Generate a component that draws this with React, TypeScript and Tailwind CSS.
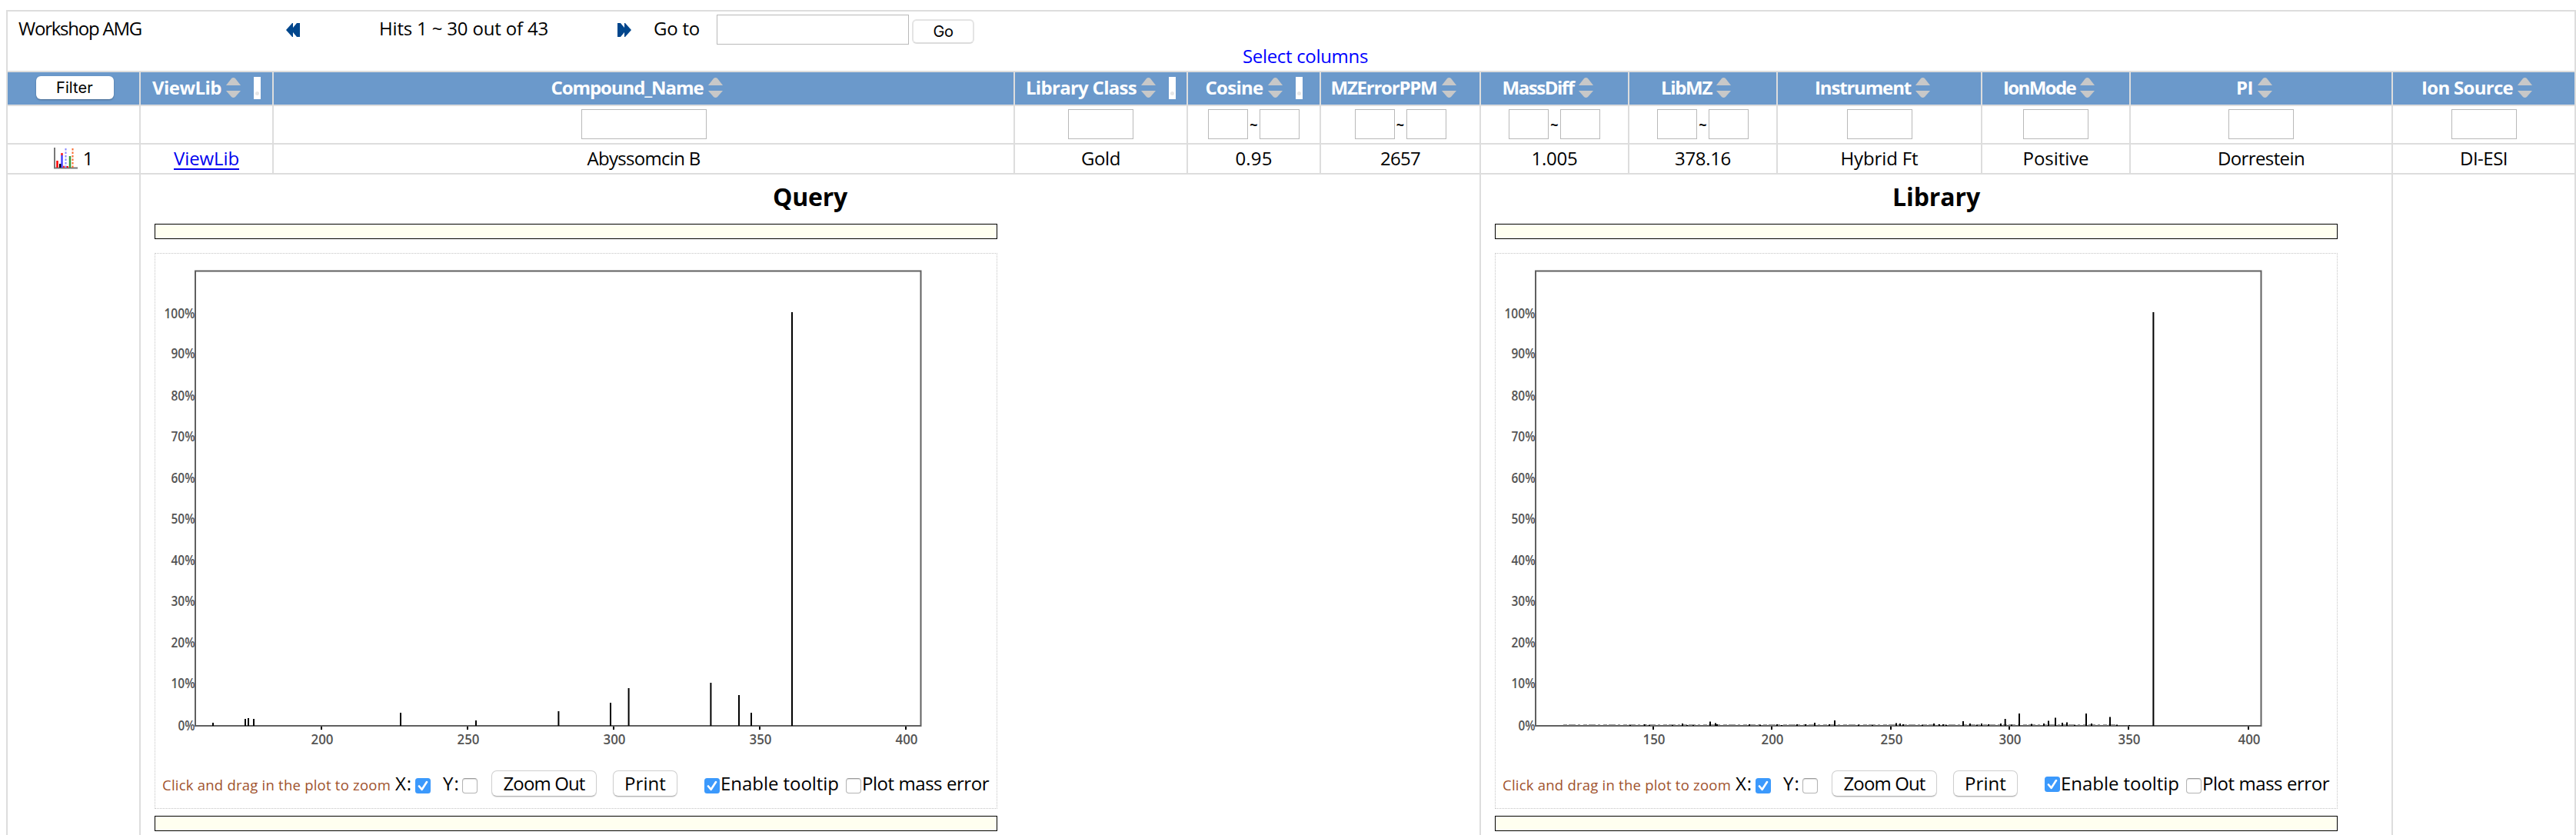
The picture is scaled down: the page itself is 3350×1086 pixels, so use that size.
import { useLayoutEffect, useRef, useState } from "react";

/* Text set to an exact measure by adjusting its tracking. */
function Fit({ w, children, className = "" }: { w: number; children: string; className?: string }) {
  const ref = useRef<HTMLSpanElement>(null);
  const [tracking, setTracking] = useState(0);
  useLayoutEffect(() => {
    if (!ref.current) return;
    const natural = ref.current.getBoundingClientRect().width;
    setTracking((w - natural) / children.length);
  }, []);
  return (
    <span ref={ref} className={`inline-block whitespace-pre ${className}`} style={{ letterSpacing: tracking }}>
      {children}
    </span>
  );
}

type Filter = "none" | "wide" | "single" | "range";
type Column = { label: string; w: number; bar?: boolean; filter: Filter; value: string; vw: number };

const columns: Column[] = [
  { label: "ViewLib", w: 90, bar: true, filter: "none", value: "ViewLib", vw: 85 },
  { label: "Compound_Name", w: 198, filter: "wide", value: "Abyssomcin B", vw: 147 },
  { label: "Library Class", w: 144, bar: true, filter: "single", value: "Gold", vw: 51 },
  { label: "Cosine", w: 75, bar: true, filter: "range", value: "0.95", vw: 48 },
  { label: "MZErrorPPM", w: 138, filter: "range", value: "2657", vw: 52 },
  { label: "MassDiff", w: 93, filter: "range", value: "1.005", vw: 60 },
  { label: "LibMZ", w: 66, filter: "range", value: "378.16", vw: 73 },
  { label: "Instrument", w: 125, filter: "single", value: "Hybrid Ft", vw: 101 },
  { label: "IonMode", w: 94, filter: "single", value: "Positive", vw: 86 },
  { label: "PI", w: 22, filter: "single", value: "Dorrestein", vw: 113 },
  { label: "Ion Source", w: 119, filter: "single", value: "DI-ESI", vw: 62 },
];

const GRID =
  "grid grid-cols-[173px_173px_964px_225px_173px_208px_193px_193px_266px_193px_341px_238px] border-t-2 border-[#dddddd]";
const CELL = "border-l-2 border-[#dddddd] flex items-center justify-center";
const INPUT = "h-[39px] border border-[#b9b9b9] bg-white";

function SortArrows() {
  return (
    <svg className="ml-[6px] h-[26px] w-[19px] shrink-0" viewBox="0 0 19 26">
      <path d="M0 10H19L12 1Q9.500 -1 7 1Z" fill="#c8c8c8" />
      <path d="M0 17H19L12 25Q9.500 27 7 25Z" fill="#c8c8c8" />
    </svg>
  );
}

function FilterInputs({ kind }: { kind: Filter }) {
  if (kind === "none") return null;
  if (kind === "range")
    return (
      <>
        <div className={`${INPUT} w-[52px]`} />
        <span className="w-[15px] pt-[2px] text-center text-[18px] leading-none font-bold">~</span>
        <div className={`${INPUT} w-[52px]`} />
      </>
    );
  return kind === "wide" ? <div className={`${INPUT} w-[163px]`} /> : <div className={`${INPUT} w-[85px]`} />;
}

function ChartIcon() {
  return (
    <svg className="h-[28px] w-[31px]" viewBox="0 0 31 28">
      <path d="M1 0V26.500H31" fill="none" stroke="#777" strokeWidth="2" />
      <path d="M4.500 17V26M17.500 24V26" stroke="#f00" strokeWidth="2.500" />
      <path d="M8.500 21V26" stroke="#000" strokeWidth="3" />
      <path d="M10.500 9V26" stroke="#44f" strokeWidth="2.500" />
      <path d="M10.500 7V10M12 25h2" stroke="#f22" strokeWidth="2.500" />
      <path d="M15.500 1V26" stroke="#88f" strokeWidth="2" strokeDasharray="2.500 2" />
      <path d="M21 11V26" stroke="#393" strokeWidth="2.500" />
      <path d="M24.500 1V26" stroke="#f96a2c" strokeWidth="2" strokeDasharray="2.500 2" />
    </svg>
  );
}

function Check({ on, raised }: { on?: boolean; raised?: boolean }) {
  const lift = raised ? "-mt-1" : "";
  return on ? (
    <svg className={`${lift} size-5 shrink-0`} viewBox="0 0 20 20">
      <rect width="20" height="20" rx="3.500" fill="#3b99fc" />
      <path d="M5 10.500L8.700 14.800L15 5" fill="none" stroke="#fff" strokeWidth="2.600" strokeLinecap="round" strokeLinejoin="round" />
    </svg>
  ) : (
    <div className="size-5 shrink-0 rounded-[4px] border border-[#b4b4b4] border-t-[#9a9a9a] bg-white shadow-[inset_0_1px_1px_#dddddd]" />
  );
}

type Mark = [number, number];
const queryPeaks: Mark[] = [
  [277, 940], [319, 935], [323, 934], [330, 935], [521, 927], [619, 937], [726.4, 925], [794, 914],
  [817.6, 895], [924.4, 888], [961, 904], [977, 927], [1030, 406],
];
const queryTicks: Mark[] = [[200, 418], [250, 608], [300, 798], [350, 988], [400, 1178]];

const libraryPeaks: Mark[] = (
  [
    [2120, 943], [2138.7, 942], [2145, 943], [2175, 943], [2188, 941], [2194, 943], [2202, 943], [2224, 938.5], [2231, 940.5],
    [2233, 942], [2275, 942], [2289, 942.5], [2311, 942], [2317, 943], [2337, 942], [2348, 942], [2360, 940], [2379, 942],
    [2386, 937], [2417, 942.5], [2435, 943], [2466, 940.5], [2471, 941], [2475, 942], [2500, 942.5], [2515, 941],
    [2522, 942], [2527, 942], [2531, 943], [2553, 938], [2562, 941], [2571, 942.5], [2577, 941], [2586, 942], [2602, 941],
    [2607.7, 935], [2616, 942.5], [2626, 928], [2642, 941.5], [2658, 941], [2664, 937.5], [2673, 933.5], [2682, 940],
    [2688, 939.5], [2698, 943], [2713, 928], [2720, 941], [2744, 932.5], [2753, 942.5], [2769, 943], [2800.4, 406],
  ] as Mark[]
).map(([x, y]) => [x - 1743, y]);
const libraryTicks: Mark[] = [[150, 407], [200, 561], [250, 716], [300, 870], [350, 1025], [400, 1181]];

const yLabels: Mark[] = [
  [100, 407], [90, 459.5], [80, 514], [70, 567], [60, 621], [50, 674], [40, 728], [30, 781], [20, 835.5], [10, 888], [0, 943],
];

function Plot({ peaks, ticks, noise }: { peaks: Mark[]; ticks: Mark[]; noise?: boolean }) {
  return (
    <svg
      className="block h-[643px] w-[1094px] font-['Open_Sans',sans-serif] font-semibold"
      viewBox="202 330 1094 643"
      fill="#545454"
      fontSize="18.500"
    >
      {yLabels.map(([v, y]) => {
        const w = v === 100 ? 40 : v === 0 ? 22 : 31;
        return (
          <text key={v} x={253.5 - w} y={y + 6.5} textLength={w} lengthAdjust="spacingAndGlyphs">
            {v}%
          </text>
        );
      })}
      <rect x="254" y="352.500" width="943.500" height="591.500" fill="none" stroke="#606060" strokeWidth="2" />
      {noise && <path d="M290 943H1010" stroke="#777" strokeWidth="1.500" strokeDasharray="5 2 9 3 3 4" />}
      {peaks.map(([x, y], i) => (
        <rect key={i} x={x - 1} y={y} width="2" height={944 - y} fill="#000" />
      ))}
      {ticks.map(([v, x]) => (
        <g key={v}>
          <rect x={x - 1} y="945" width="2" height="4" fill="#000" />
          <text x={x - 13.5} y="967.500" textLength="29" lengthAdjust="spacingAndGlyphs">
            {v}
          </text>
        </g>
      ))}
    </svg>
  );
}

function PushButton({ label, tw, className }: { label: string; tw: number; className: string }) {
  return (
    <button
      className={`flex h-[34px] shrink-0 items-center justify-center rounded-[7px] border border-[#cfcfcf] border-b-[#b5b5b5] bg-white pb-[1px] shadow-[0_1px_1px_#dddddd] ${className}`}
    >
      <Fit w={tw}>{label}</Fit>
    </button>
  );
}

function Spectrum(props: { title: string; tw: number; peaks: Mark[]; ticks: Mark[]; raised?: boolean; noise?: boolean }) {
  return (
    <div className="h-[860px] border-l-2 border-[#dddddd]">
      <h2 className="flex h-[64px] justify-center pt-[6px] text-[32px] leading-[46px] font-bold">
        <Fit w={props.tw}>{props.title}</Fit>
      </h2>
      <div className="ml-[18px] w-[1096px]">
        <div className="h-[20px] border border-black bg-[#fffff0]" />
        <div className="mt-[18px] h-[723px] border border-dotted border-[#c4c4c4]">
          <Plot peaks={props.peaks} ticks={props.ticks} noise={props.noise} />
          <div className="flex h-[96px] items-center pb-[4px] pl-[9px] leading-[32px]">
            <Fit w={297} className="pt-[3px] text-[18.500px] text-[#a0522d]">Click and drag in the plot to zoom</Fit>
            <Fit w={22} className="ml-[6px]">X:</Fit>
            <div className="ml-[4px] pt-[5px]"><Check on /></div>
            <Fit w={22} className="ml-[16px]">Y:</Fit>
            <div className="ml-[3px] pt-[5px]"><Check /></div>
            <PushButton label="Zoom Out" tw={106} className="ml-[18px] w-[137px]" />
            <PushButton label="Print" tw={54} className="ml-[21px] w-[84px]" />
            <div className="ml-[35px] pt-[5px]"><Check on raised={props.raised} /></div>
            <Fit w={154} className="ml-[1px]">Enable tooltip</Fit>
            <div className="ml-[9px] pt-[5px]"><Check /></div>
            <Fit w={165} className="ml-[1px]">Plot mass error</Fit>
          </div>
        </div>
        <div className="mt-[9px] h-[20px] border border-black bg-[#fffff0]" />
      </div>
    </div>
  );
}

function Chevrons({ flip }: { flip?: boolean }) {
  return (
    <svg className={`h-[18px] w-[18px] ${flip ? "-scale-x-100" : ""}`} viewBox="0 0 18 18">
      <path d="M0 9L8 0H9V6L14 0H18V4L14 9L18 14V18H14L9 12V18H8Z" fill="#00468c" />
      <path d="M9 9L17 0H18V18H17Z" fill="#00468c" />
    </svg>
  );
}

export default function App() {
  return (
    <div className="h-[1086px] w-[3350px] overflow-hidden bg-white pt-[13px] pl-[8px] font-['Open_Sans',sans-serif] text-[24px] leading-[32px] font-medium text-black">
      <div className="w-[3342px] border-t-2 border-r-2 border-[#dddddd]">
        <div className="h-[77px] border-l-2 border-[#dddddd] pt-[4px]">
          <div className="flex h-[39px] items-center">
            <Fit w={160} className="-mt-[3px] ml-[14px]">Workshop AMG</Fit>
            <div className="ml-[188px]"><Chevrons /></div>
            <Fit w={220} className="-mt-[3px] ml-[103px]">Hits 1 ~ 30 out of 43</Fit>
            <div className="ml-[90px]"><Chevrons flip /></div>
            <Fit w={60} className="-mt-[3px] ml-[29px]">Go to</Fit>
            <div className={`${INPUT} ml-[22px] w-[250px]`} />
            <button className="mt-[5px] ml-[4px] flex h-[32px] w-[81px] items-center justify-center rounded-[6px] border-2 border-[#e4e4e4] border-b-[#dcdcdc] bg-white font-[Inter,sans-serif] text-[20px] leading-none font-normal">
              <Fit w={26}>Go</Fit>
            </button>
          </div>
          <div className="ml-[1606px] leading-[30px] text-[#0000ff]">
            <Fit w={163}>Select columns</Fit>
          </div>
        </div>

        <div className={GRID}>
          <div className={`${CELL} h-[42px] bg-[#6b99cb]`}>
            <button className="-mt-[2px] ml-[3px] flex h-[30px] w-[101px] items-center justify-center rounded-[6px] bg-white font-[Inter,sans-serif] text-[20px] leading-none font-normal shadow-[0_1px_2px_#47698f]">
              <Fit w={48}>Filter</Fit>
            </button>
          </div>
          {columns.map((c) => (
            <div key={c.label} className={`${CELL} bg-[#6b99cb] pb-[2px] font-bold text-white`}>
              <Fit w={c.w}>{c.label}</Fit>
              <SortArrows />
              {c.bar ? (
                <div className="ml-[17px] flex h-[29px] w-[9px] items-end justify-center bg-white pb-[5px]">
                  <div className="size-[5px] rounded-full bg-[#e6e6e6]" />
                </div>
              ) : (
                <div className="w-[18px]" />
              )}
            </div>
          ))}
        </div>

        <div className={GRID}>
          <div className={`${CELL} h-[48px]`} />
          {columns.map((c) => (
            <div key={c.label} className={`${CELL} pb-[2px]`}>
              <FilterInputs kind={c.filter} />
            </div>
          ))}
        </div>

        <div className={GRID}>
          <div className={`${CELL} h-[37px] pb-[1px]`}>
            <ChartIcon />
            <span className="ml-[7px]">1</span>
          </div>
          {columns.map((c, i) => (
            <div key={c.label} className={`${CELL} pb-[1px]`}>
              {i === 0 ? (
                <Fit w={c.vw} className="text-[#0000ee] underline decoration-2 underline-offset-[4px]">{c.value}</Fit>
              ) : (
                <Fit w={c.vw}>{c.value}</Fit>
              )}
            </div>
          ))}
        </div>

        <div className="grid grid-cols-[173px_1743px_1186px_238px] border-t-2 border-[#dddddd]">
          <div className="border-l-2 border-[#dddddd]" />
          <Spectrum title="Query" tw={97} peaks={queryPeaks} ticks={queryTicks} />
          <Spectrum title="Library" tw={114} peaks={libraryPeaks} ticks={libraryTicks} raised noise />
          <div className="border-l-2 border-[#dddddd]" />
        </div>
      </div>
    </div>
  );
}
